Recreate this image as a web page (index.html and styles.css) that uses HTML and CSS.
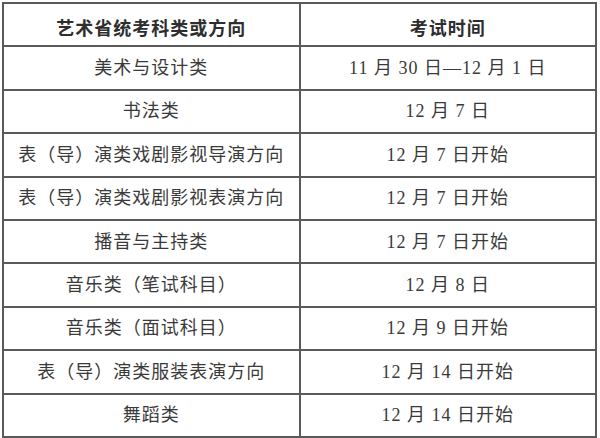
FILE: index.html
```html
<!DOCTYPE html>
<html lang="zh-CN">
<head>
<meta charset="utf-8">
<title>艺术省统考时间</title>
<link rel="stylesheet" href="styles.css">
</head>
<body>
<table class="schedule">
  <thead>
    <tr class="head-row">
      <th class="col-cat">艺术省统考科类或方向</th>
      <th class="col-time">考试时间</th>
    </tr>
  </thead>
  <tbody>
    <tr><td>美术与设计类</td><td>11 月 30 日—12 月 1 日</td></tr>
    <tr><td>书法类</td><td>12 月 7 日</td></tr>
    <tr><td>表（导）演类戏剧影视导演方向</td><td>12 月 7 日开始</td></tr>
    <tr><td>表（导）演类戏剧影视表演方向</td><td>12 月 7 日开始</td></tr>
    <tr><td>播音与主持类</td><td>12 月 7 日开始</td></tr>
    <tr><td>音乐类（笔试科目）</td><td>12 月 8 日</td></tr>
    <tr><td>音乐类（面试科目）</td><td>12 月 9 日开始</td></tr>
    <tr><td>表（导）演类服装表演方向</td><td>12 月 14 日开始</td></tr>
    <tr><td>舞蹈类</td><td>12 月 14 日开始</td></tr>
  </tbody>
</table>
</body>
</html>
```
FILE: styles.css
```css
html, body {
  margin: 0;
  padding: 0;
  background: #fff;
}

.schedule {
  margin: 2px 0 0 2px;
  width: 595px;
  border-collapse: collapse;
  table-layout: fixed;
  font-family: "Liberation Serif", "Noto Sans CJK SC", serif;
  font-size: 18px;
  letter-spacing: 1px;
  color: #3a3a3a;
}

.schedule th,
.schedule td {
  border: 2px solid #5a5a5a;
  padding: 0;
  text-align: center;
  vertical-align: middle;
  line-height: 20px;
}

.schedule th {
  font-weight: 600;
  color: #2e2e2e;
  padding-top: 9px;
}

.col-cat,
.col-time {
  width: 50%;
}

.schedule tr {
  height: 43.4px;
}
```
